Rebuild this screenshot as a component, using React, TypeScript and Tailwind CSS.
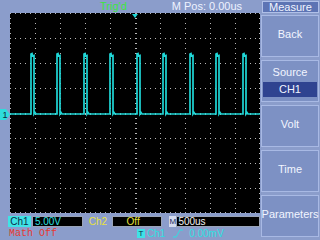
import React from 'react';

const W = 250;
const H = 200;
const pulses = [21, 47, 74, 100, 127, 153, 180, 206, 233];

function Graticule() {
    const dots: React.ReactNode[] = [];
    // vertical division lines
    for (let k = 0; k <= 10; k++) {
        const x = k === 10 ? W - 1 : k * 25;
        for (let y = 0; y < H; y += 5) {
            dots.push(<rect key={`v${k}-${y}`} x={x} y={y} width={k === 5 ? 2 : 1} height={1} />);
        }
    }
    // horizontal division lines
    for (let k = 0; k <= 8; k++) {
        const y = k === 8 ? H - 1 : k * 25;
        for (let x = 0; x < W; x += 5) {
            dots.push(<rect key={`h${k}-${x}`} x={x} y={y} width={1} height={k === 4 ? 2 : 1} />);
        }
    }
    return <g fill="#b8b8b8">{dots}</g>;
}

function tracePath() {
    let d = 'M0,101';
    for (const p of pulses) {
        d += ` L${p},101 L${p},41 L${p + 1},40.5 L${p + 1.5},43 L${p + 3},42.5 L${p + 3},101 L${p + 4},99.5 L${p + 5},101`;
    }
    d += ` L${W},101`;
    return d;
}

function Screen() {
    return (
        <div className="w-[250px] h-[200px] bg-black">
            <svg width={W} height={H} viewBox={`0 0 ${W} ${H}`}>
                <Graticule />
                <path d={tracePath()} fill="none" stroke="#1fd6d6" strokeWidth={1.7} strokeLinejoin="miter" />
                <polygon points="122,1 128,1 125,5" fill="#1fd6d6" />
            </svg>
        </div>
    );
}

function Panel({ children, className = '' }: { children: React.ReactNode; className?: string }) {
    return (
        <div className={`h-[42px] bg-[#7d91c4] border border-[#a8b9e4] flex flex-col items-center justify-center text-[11px] text-[#f2f5ff] ${className}`}>
            {children}
        </div>
    );
}

export default function App() {
    return (
        <div className="w-[320px] h-[240px] bg-[#8b9dcb] flex overflow-hidden leading-none" style={{ fontFamily: '"Liberation Sans", Arial, sans-serif' }}>
            {/* Left: screen column */}
            <div className="w-[260px] flex flex-col">
                <div className="h-[14px] flex items-center text-[11px]">
                    <span className="ml-[100px] text-[#3ee63e]">Trig'd</span>
                    <span className="ml-[45px] text-[#eef2ff]">M Pos: 0.00us</span>
                </div>
                <div className="flex h-[200px]">
                    <div className="w-[10px] flex flex-col">
                        <svg width={10} height={11} className="mt-[96px]" viewBox="0 0 10 11">
                            <polygon points="0,0 6,0 10,5.5 6,11 0,11" fill="#2fdcdc" />
                            <text x={2.5} y={9} fontSize={9} fill="#0a2a40" fontFamily="Liberation Sans, sans-serif">1</text>
                        </svg>
                    </div>
                    <Screen />
                </div>
                <div className="mt-[3px] h-[11px] flex items-stretch text-[10px]">
                    <div className="ml-[8px] w-[23px] bg-[#3fe3e6] text-[#0b2a48] flex items-center justify-center">Ch1</div>
                    <div className="ml-[1px] w-[51px] bg-black border border-[#9aa4b8] text-[#2fe0e0] flex items-center pl-[2px]">5.00V</div>
                    <div className="ml-[6px] w-[23px] text-[#e9e33c] flex items-center">Ch2</div>
                    <div className="w-[51px] bg-black border border-[#9aa4b8] text-[#e9e33c] flex items-center pl-[14px]">Off</div>
                    <div className="ml-[7px] w-[7px] bg-[#d4dcf0] text-[#1c2c5c] text-[8px] flex items-center justify-center">M</div>
                    <div className="w-[84px] bg-black border border-[#9aa4b8] text-[#f4f4f4] flex items-center pl-[1px]">500us</div>
                </div>
                <div className="h-[13px] flex items-center text-[10px]">
                    <span className="ml-[9px] w-[128px] text-[#e83a30]" style={{ fontFamily: '"Liberation Mono", monospace' }}>Math Off</span>
                    <span className="w-[8px] h-[9px] bg-[#3fe3e6] text-[#0b2a48] text-[8px] flex items-center justify-center">T</span>
                    <span className="ml-[2px] text-[#2fe0e0]">Ch1</span>
                    <svg width={10} height={9} className="ml-[8px]" viewBox="0 0 10 9">
                        <polyline points="0,8 3,8 7,1 10,1" fill="none" stroke="#2fe0e0" strokeWidth={1} />
                    </svg>
                    <span className="ml-[6px] text-[#2fe0e0]">0.00mV</span>
                </div>
            </div>
            {/* Right: menu column */}
            <div className="w-[60px] flex flex-col pl-[1px] pr-[1px] pt-[1px]">
                <div className="h-[12px] bg-[#5d74b4] border border-[#b0c0e8] text-[11px] text-[#f2f5ff] flex items-center justify-center ml-[1px]">Measure</div>
                <div className="mt-[2px] flex flex-col gap-[3px]">
                    <Panel><span className="-mt-[4px]">Back</span></Panel>
                    <Panel className="justify-start">
                        <span className="mt-[6px]">Source</span>
                        <div className="mt-[4px] w-[54px] h-[15px] bg-[#2f4390] flex items-center justify-center">CH1</div>
                    </Panel>
                    <Panel><span className="-mt-[4px]">Volt</span></Panel>
                    <Panel><span className="-mt-[4px]">Time</span></Panel>
                    <Panel><span className="-mt-[4px]">Parameters</span></Panel>
                </div>
            </div>
        </div>
    );
}
